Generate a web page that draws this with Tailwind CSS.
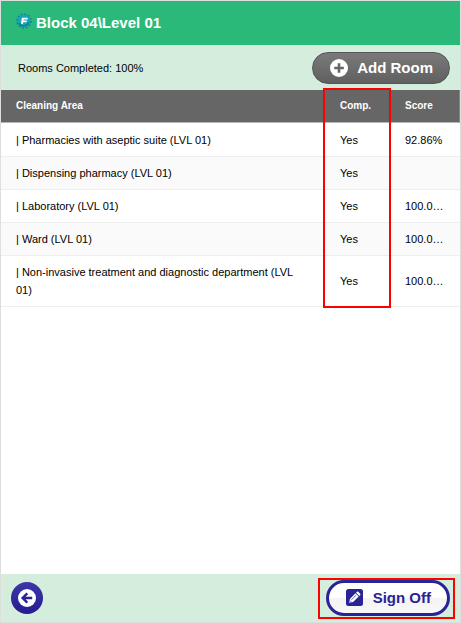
<!DOCTYPE html>
<html lang="en">
<head>
    <meta charset="UTF-8">
    <meta name="viewport" content="width=device-width, initial-scale=1.0">
    <title>Block 04\Level 01</title>
    <script src="https://cdn.jsdelivr.net/npm/@tailwindcss/browser@4"></script>
</head>
<body class="bg-white text-black font-['Liberation_Sans',Arial,sans-serif]">
    <div class="relative flex flex-col min-h-screen border border-[#dedede]">
        <header class="flex items-center h-11 pl-[15px] bg-[#2bb97a]">
            <svg class="w-4 h-4 mr-1 mb-1" viewBox="0 0 16 16" aria-hidden="true">
                <circle cx="8" cy="8" r="6.8" fill="none" stroke="#12859c" stroke-width="1.8" stroke-dasharray="2.1 1.46"/>
                <circle cx="8" cy="8" r="6.2" fill="#16a5b5"/>
                <path d="M3 10a5.5 5.5 0 0 0 10-1" fill="none" stroke="#0b8499" stroke-width="1.6"/>
                <path d="M6 11.2l.7-5.6h5M6.3 8.4h4.4" fill="none" stroke="#fff" stroke-width="1.9"/>
            </svg>
            <h1 class="text-[15px] font-bold text-white">Block 04\Level 01</h1>
        </header>

        <div class="flex items-center justify-between h-[45px] px-[17px] pr-2.5 bg-[#d5eddd]">
            <p class="pt-px text-[11px]">Rooms Completed: 100%</p>
            <button type="button" class="flex items-center h-8 pl-[17px] pr-4 gap-[9px] rounded-full border border-[#555] bg-linear-to-b from-[#7a7a7a] to-[#606060] text-white text-[15px] font-bold">
                <svg class="w-[18px] h-[18px]" viewBox="0 0 18 18" aria-hidden="true">
                    <circle cx="9" cy="9" r="9" fill="#fff"/>
                    <path d="M9 4.2v9.6M4.2 9h9.6" stroke="#666" stroke-width="2.6"/>
                </svg>
                <span class="pt-px">Add Room</span>
            </button>
        </div>

        <main class="relative grow">
            <table class="w-full table-fixed border-separate border-spacing-0 text-[11px] leading-[18px]">
                <colgroup>
                    <col>
                    <col class="w-[65px]">
                    <col class="w-[70px]">
                </colgroup>
                <thead class="bg-[#666] text-white text-[10px] text-left">
                    <tr class="h-[33px]">
                        <th class="pl-[15px] border-b border-b-[#b5b5b5]">Cleaning Area</th>
                        <th class="pl-[15px] border-b border-b-[#b5b5b5]">Comp.</th>
                        <th class="pl-[15px] border-b border-b-[#b5b5b5] border-r border-r-[#2bb97a]">Score</th>
                    </tr>
                </thead>
                <tbody class="[&_td]:border-b [&_td]:border-[#eee] [&_td]:pl-[15px] [&_td]:py-[7px]">
                    <tr class="h-[34px]">
                        <td>| Pharmacies with aseptic suite (LVL 01)</td>
                        <td>Yes</td>
                        <td>92.86%</td>
                    </tr>
                    <tr class="h-[33px] bg-[#fafafa]">
                        <td>| Dispensing pharmacy (LVL 01)</td>
                        <td>Yes</td>
                        <td></td>
                    </tr>
                    <tr class="h-[33px]">
                        <td>| Laboratory (LVL 01)</td>
                        <td>Yes</td>
                        <td>100.0…</td>
                    </tr>
                    <tr class="h-[33px] bg-[#fafafa]">
                        <td>| Ward (LVL 01)</td>
                        <td>Yes</td>
                        <td>100.0…</td>
                    </tr>
                    <tr class="h-[51px]">
                        <td class="pr-6">| Non-invasive treatment and diagnostic department (LVL 01)</td>
                        <td>Yes</td>
                        <td>100.0…</td>
                    </tr>
                </tbody>
            </table>
            <!-- highlight round the Comp. column -->
            <div class="absolute -top-0.5 right-[69px] w-[68px] h-[220px] border-2 border-[#f00] pointer-events-none"></div>
        </main>

        <footer class="flex items-center justify-between h-12 pl-2.5 pr-[5px] bg-[#d5eddd]">
            <button type="button" aria-label="Back" class="flex items-center justify-center w-8 h-8 rounded-full bg-linear-to-b from-[#3d36a8] to-[#241c8f]">
                <svg class="w-[18px] h-[18px]" viewBox="0 0 18 18" aria-hidden="true">
                    <circle cx="9" cy="9" r="9" fill="#fff"/>
                    <path d="M14.2 9H5M9.3 4.3L4.6 9l4.7 4.7" fill="none" stroke="#2a2396" stroke-width="2.4"/>
                </svg>
            </button>
            <div class="border-2 border-[#f00] pl-1.5 pr-[3px] pb-px">
                <button type="button" class="flex items-center h-9 pl-[17px] pr-4 gap-2.5 rounded-full border-3 border-[#2a2396] bg-linear-to-b from-white from-50% via-[#f3f3f3] via-50% to-[#f8f8f8] text-[#2a2396] text-[15px] font-bold">
                    <svg class="w-[17px] h-[17px]" viewBox="0 0 17 17" aria-hidden="true">
                        <rect width="17" height="17" rx="2.5" fill="#2a2396"/>
                        <path d="M3.2 13.8l.7-3.9 5.6-5.6 3.2 3.2-5.6 5.6z" fill="#fff"/>
                        <path d="M10.1 3.7l.9-.9c.4-.4.9-.4 1.3 0l1.9 1.9c.4.4.4.9 0 1.3l-.9.9z" fill="#fff"/>
                        <path d="M5.5 10.8l4.6-4.6M4 11.6l1.4 1.4" stroke="#2a2396" stroke-width=".7"/>
                    </svg>
                    <span class="pt-px">Sign Off</span>
                </button>
            </div>
        </footer>
    </div>
</body>
</html>
